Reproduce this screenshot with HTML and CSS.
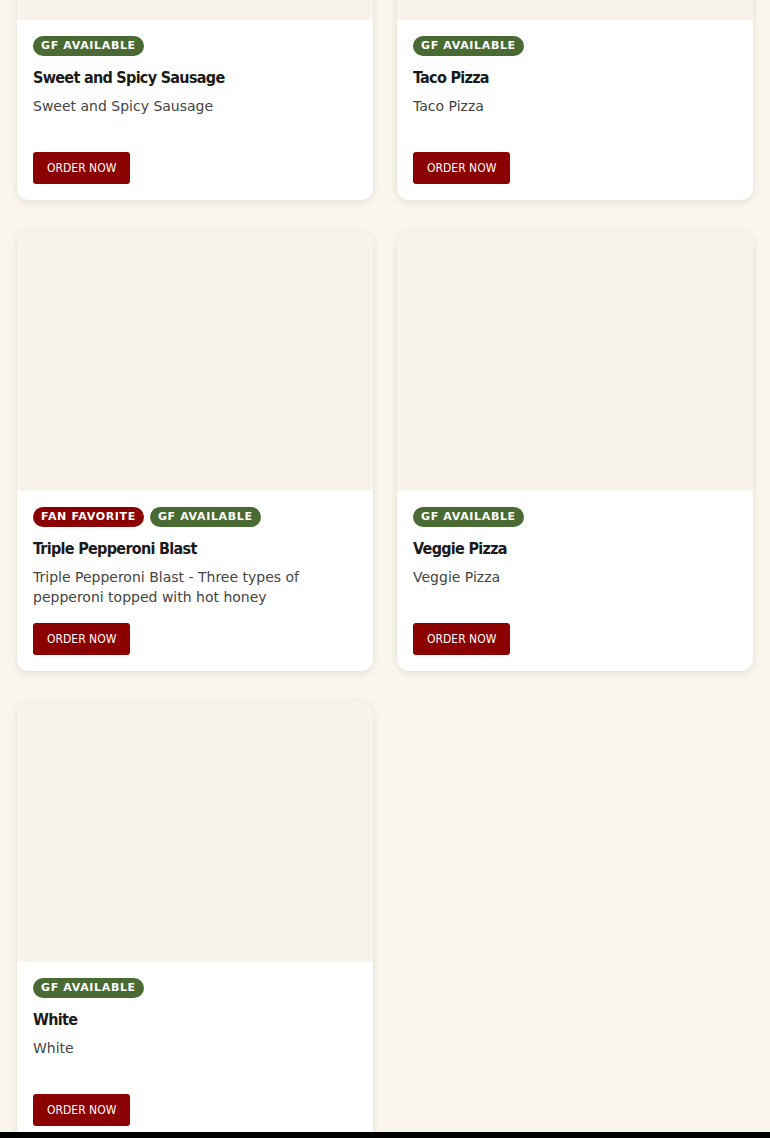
FILE: index.html
```html
<!DOCTYPE html>
<html lang="en">
<head>
    <meta charset="UTF-8">
    <meta name="viewport" content="width=device-width, initial-scale=1.0">
    <title>Pizza Menu</title>
    <link rel="stylesheet" href="styles.css">
</head>
<body>
    <main class="menu-grid">
        <div class="pizza-card">
            <div class="pizza-img"></div>
            <div class="pizza-body">
                <div class="badges">
                    <span class="badge gf">GF Available</span>
                </div>
                <h3 class="pizza-name">Sweet and Spicy Sausage</h3>
                <p class="pizza-desc">Sweet and Spicy Sausage</p>
                <a href="#" class="order-btn">Order Now</a>
            </div>
        </div>
        <div class="pizza-card">
            <div class="pizza-img"></div>
            <div class="pizza-body">
                <div class="badges">
                    <span class="badge gf">GF Available</span>
                </div>
                <h3 class="pizza-name">Taco Pizza</h3>
                <p class="pizza-desc">Taco Pizza</p>
                <a href="#" class="order-btn">Order Now</a>
            </div>
        </div>
        <div class="pizza-card">
            <div class="pizza-img"></div>
            <div class="pizza-body">
                <div class="badges">
                    <span class="badge fav">Fan Favorite</span>
                    <span class="badge gf">GF Available</span>
                </div>
                <h3 class="pizza-name">Triple Pepperoni Blast</h3>
                <p class="pizza-desc">Triple Pepperoni Blast - Three types of pepperoni topped with hot honey</p>
                <a href="#" class="order-btn">Order Now</a>
            </div>
        </div>
        <div class="pizza-card">
            <div class="pizza-img"></div>
            <div class="pizza-body">
                <div class="badges">
                    <span class="badge gf">GF Available</span>
                </div>
                <h3 class="pizza-name">Veggie Pizza</h3>
                <p class="pizza-desc">Veggie Pizza</p>
                <a href="#" class="order-btn">Order Now</a>
            </div>
        </div>
        <div class="pizza-card">
            <div class="pizza-img"></div>
            <div class="pizza-body">
                <div class="badges">
                    <span class="badge gf">GF Available</span>
                </div>
                <h3 class="pizza-name">White</h3>
                <p class="pizza-desc">White</p>
                <a href="#" class="order-btn">Order Now</a>
            </div>
        </div>
    </main>
    <div class="bottom-bar"></div>
</body>
</html>
```

FILE: styles.css
```css
* {
    margin: 0;
    padding: 0;
    box-sizing: border-box;
}

body {
    background: #faf6ec;
    font-family: "DejaVu Sans", sans-serif;
    color: #1a1a1a;
}

.menu-grid {
    display: grid;
    grid-template-columns: 1fr 1fr;
    column-gap: 24px;
    row-gap: 31px;
    padding: 0 17px 40px;
    margin-top: -240px;
}

.pizza-card {
    background: #fff;
    border-radius: 12px;
    box-shadow: 0 2px 8px rgba(0, 0, 0, 0.1);
    overflow: hidden;
    display: flex;
    flex-direction: column;
}

.pizza-img {
    height: 260px;
    background: #f8f4ec;
}

.pizza-body {
    padding: 16px;
    display: flex;
    flex-direction: column;
    align-items: flex-start;
}

.badges {
    display: flex;
    gap: 6px;
}

.badge {
    display: inline-block;
    height: 20px;
    line-height: 20px;
    padding: 0 8px;
    border-radius: 10px;
    color: #fff;
    font-size: 11px;
    font-weight: bold;
    letter-spacing: 0.65px;
    text-transform: uppercase;
}

.badge.gf {
    background: #4a6a33;
}

.badge.fav {
    background: #8b0000;
}

.pizza-name {
    font-family: "DejaVu Sans Condensed", "DejaVu Sans", sans-serif;
    font-stretch: condensed;
    font-size: 16px;
    font-weight: bold;
    letter-spacing: -0.7px;
    line-height: 24px;
    margin: 10px 0 6px;
    color: #1a1a1a;
}

.pizza-desc {
    font-size: 14px;
    line-height: 20px;
    color: #444;
    min-height: 40px;
    margin-bottom: 16px;
}

.order-btn {
    display: inline-block;
    height: 32px;
    line-height: 32px;
    padding: 0 14px;
    background: #8b0000;
    color: #fff;
    border-radius: 3px;
    text-decoration: none;
    text-transform: uppercase;
    font-family: "DejaVu Sans Condensed", "DejaVu Sans", sans-serif;
    font-stretch: condensed;
    font-size: 12px;
}

.bottom-bar {
    position: fixed;
    left: 0;
    right: 0;
    bottom: 0;
    height: 6px;
    background: #000;
}
```
